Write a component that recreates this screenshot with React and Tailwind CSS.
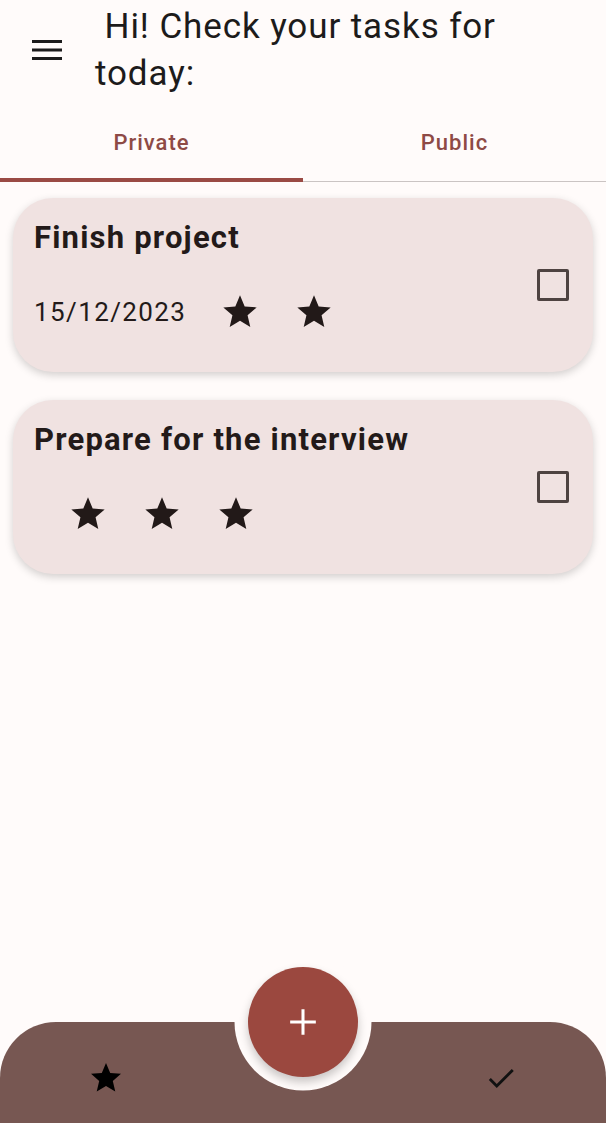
import { useState } from "react";

const TASKS = [
  { id: 1, title: "Finish project", date: "15/12/2023", stars: 2 },
  { id: 2, title: "Prepare for the interview", date: "", stars: 3 },
];

function Star({ className }) {
  return (
    <svg viewBox="0 0 24 24" className={className} fill="currentColor">
      <path d="M12 17.27L18.18 21l-1.64-7.03L22 9.24l-7.19-.61L12 2 9.19 8.63 2 9.24l5.46 4.73L5.82 21z" />
    </svg>
  );
}

function TaskCard({ task }) {
  return (
    <div className="mx-[13px] h-[174px] rounded-[40px] bg-[#f0e2e1] shadow-[0_3px_8px_rgba(0,0,0,0.18)] flex items-center pl-[21px] pr-[24px]">
      <div className="flex-1 flex flex-col self-stretch pt-[22px]">
        <h2 className="text-[31px] leading-[36px] font-bold text-[#231a19] tracking-[1.2px]">{task.title}</h2>
        <div className="flex items-center mt-[36px] h-[40px]">
          <span className="text-[26px] text-[#231a19] tracking-[1.4px]">{task.date}</span>
          <div className="flex ml-[17px]">
            {Array.from({ length: task.stars }).map((_, i) => (
              <div key={i} className="w-[74px] flex justify-center">
                <Star className="w-[40px] h-[40px] text-[#221918]" />
              </div>
            ))}
          </div>
        </div>
      </div>
      <div className="w-[32px] h-[32px] border-[3px] border-[#4e4341] rounded-[2px]" />
    </div>
  );
}

export default function App() {
  const [tab, setTab] = useState("private");

  return (
    <div className="h-[1123px] flex flex-col bg-[#fffbfa] font-['Roboto',sans-serif] overflow-hidden">
      {/* Header */}
      <header className="flex items-center h-[110px] pb-[10px]">
        <div className="pl-[32px] pr-[33px]">
          <svg viewBox="0 0 30 20" className="w-[30px] h-[20px]">
            <rect y="0" width="30" height="3" fill="#1c1b1b" />
            <rect y="8.5" width="30" height="3" fill="#1c1b1b" />
            <rect y="17" width="30" height="3" fill="#1c1b1b" />
          </svg>
        </div>
        <h1 className="text-[35px] leading-[47px] text-[#1d1b1b] tracking-[0.9px] whitespace-pre-wrap">
          {" Hi! Check your tasks for\ntoday:"}
        </h1>
      </header>

      {/* Tabs */}
      <nav className="relative flex h-[72px] border-b border-[#cac4c3]">
        {[
          { id: "private", label: "Private" },
          { id: "public", label: "Public" },
        ].map((t) => (
          <button
            key={t.id}
            onClick={() => setTab(t.id)}
            className="relative flex-1 flex items-center justify-center pb-[6px] text-[22px] font-medium tracking-[1px] text-[#8e4a45]"
          >
            {t.label}
            {tab === t.id && (
              <span className="absolute left-0 right-0 -bottom-px h-[4px] bg-[#9a4a44]" />
            )}
          </button>
        ))}
      </nav>

      {/* Task list */}
      <main className="flex-1 flex flex-col gap-[28px] pt-[16px]">
        {TASKS.map((t) => (
          <TaskCard key={t.id} task={t} />
        ))}
      </main>

      {/* Bottom bar */}
      <footer className="relative h-[101px] bg-[#775752] rounded-t-[56px] flex items-center justify-between pl-[88px] pr-[88px] pt-[10px]">
        <div className="absolute left-1/2 top-0 -translate-x-1/2 -translate-y-1/2 w-[137px] h-[137px] rounded-full bg-[#fffbfa]" />
        <button className="absolute left-1/2 top-0 -translate-x-1/2 -translate-y-1/2 w-[110px] h-[110px] rounded-full bg-[#9b483f] shadow-[0_5px_10px_rgba(0,0,0,0.22)] flex items-center justify-center">
          <svg viewBox="0 0 24 24" className="w-[28px] h-[28px]" fill="none" stroke="#ffffff" strokeWidth="2.6">
            <path d="M12 1v22M1 12h22" />
          </svg>
        </button>
        <Star className="w-[36px] h-[36px] text-black" />
        <svg viewBox="0 0 24 24" className="w-[34px] h-[34px]" fill="#111">
          <path d="M9 16.17L4.83 12l-1.42 1.41L9 19 21 7l-1.41-1.41z" />
        </svg>
      </footer>
    </div>
  );
}
